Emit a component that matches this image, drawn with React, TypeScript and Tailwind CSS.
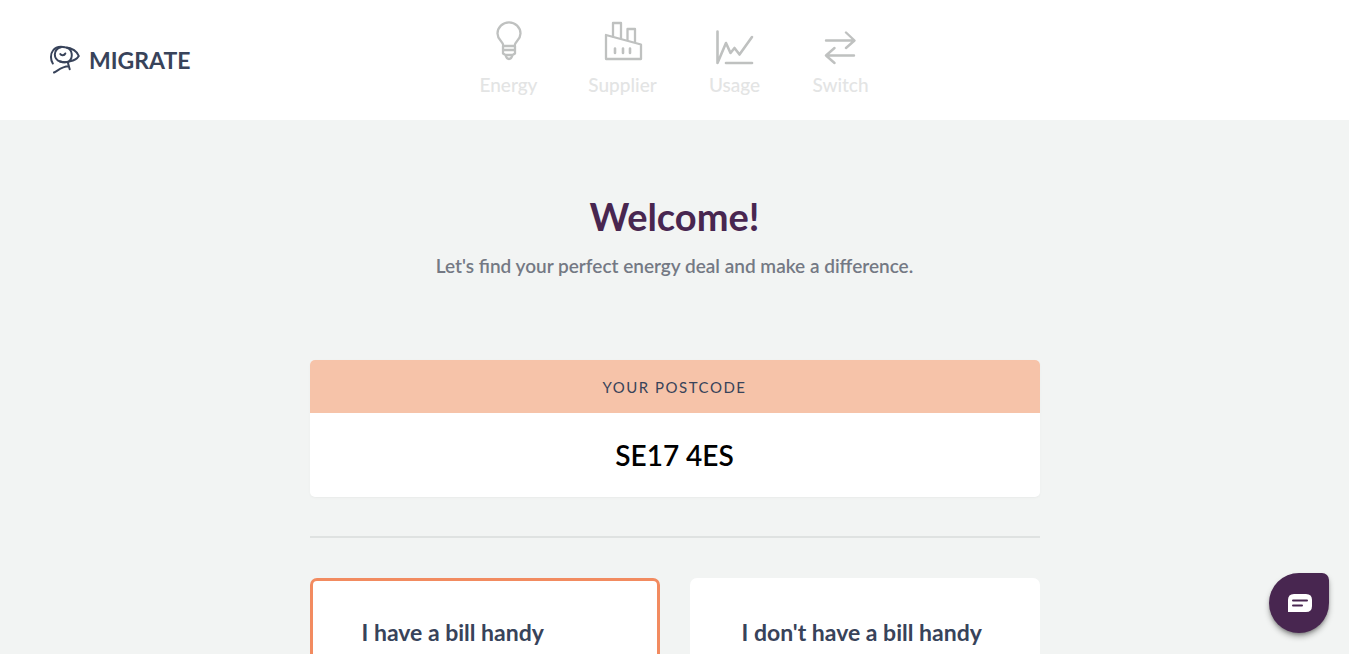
import type { ReactNode } from "react";

const line = {
  fill: "none",
  stroke: "currentColor",
  strokeLinecap: "round",
  strokeLinejoin: "round",
} as const;

function BirdLogo() {
  return (
    <svg width="32" height="30" viewBox="0 0 32 30" aria-hidden="true" {...line} strokeWidth="2">
      <path d="M3.800 18.500C1.500 15 1.200 9 4 5.500C7 1.500 12 1.300 16 2.200C23 3 28 6 29.800 11C28 14 25 15.500 21 16.300C18 17.500 14 17.500 11 16.500" />
      <path d="M18 2.800C24 5 24 13 20 16.300C15 18.500 6 17 5.800 9.500C6 5.500 8.500 3 12 2.200" />
      <path d="M11.300 9C12.300 10.800 15.300 10.700 16.300 8.500" />
      <path d="M5 27.500C9 25.500 13 21.500 19.500 21.300M19 18L20.700 24.300" />
    </svg>
  );
}

function BulbIcon() {
  return (
    <svg width="28" height="40" viewBox="0 0 28 40" aria-hidden="true" {...line} strokeWidth="2.300">
      <path d="M8.500 25C8 20 2.500 19 2.500 12.500A11.500 11.200 0 0 1 25.500 12.500C25.500 19 20 20 19.500 25Z" />
      <path d="M8 25V32.500L10.500 34H17.500L20 32.500V25M8 29H20M10.500 34C11 36 12 38 14 38S17 36 17.500 34" />
    </svg>
  );
}

function FactoryIcon() {
  return (
    <svg width="40" height="40" viewBox="0 0 40 40" aria-hidden="true" {...line} strokeWidth="2.300">
      <path d="M3 14L38 23.500V38H3Z" />
      <path d="M10 15.500V2H18V17.500M24.500 19V8H32V21" />
      <path d="M12 27.500V32M20 27.500V32M27 27.500V32" strokeWidth="2.600" />
    </svg>
  );
}

function ChartIcon() {
  return (
    <svg width="40" height="36" viewBox="0 0 40 36" aria-hidden="true" {...line} strokeWidth="2.600">
      <path d="M2.500 2.500V34L11 14L15.500 24L19.500 19L24.500 25.500L37 8" />
      <path d="M11 34H37" />
    </svg>
  );
}

function SwitchIcon() {
  return (
    <svg width="34" height="34" viewBox="0 0 34 34" aria-hidden="true" {...line} strokeWidth="2.400">
      <path d="M2 9.500H30M22 1.500L30.500 9.500L22 17M30 24.500H2M10.500 17L2 24.500L10.500 32" />
    </svg>
  );
}

function Step({ icon, label, width }: { icon: ReactNode; label: string; width: string }) {
  return (
    <li className={`flex flex-col items-center gap-2 ${width}`}>
      <span className="text-[#bfc1c0]">{icon}</span>
      <span className="text-[19px] leading-6 font-medium text-[#e3e4e4]">{label}</span>
    </li>
  );
}

export default function App() {
  return (
    <div className="h-screen overflow-hidden bg-white pr-[17px] font-['Lato','Open_Sans',sans-serif]">
      <div className="flex min-h-full flex-col bg-[#f2f4f3]">
        <header className="grid h-[120px] shrink-0 grid-cols-[1fr_auto_1fr] bg-white">
          <a href="#" className="flex items-center gap-2 pl-[49px] text-[#38435a]">
            <BirdLogo />
            <span className="text-[23px] font-bold">MIGRATE</span>
          </a>
          <nav aria-label="Progress" className="flex items-end pb-[23px]">
            <ol className="flex items-end gap-[50px]">
              <Step width="w-[58px]" label="Energy" icon={<span className="block pb-1"><BulbIcon /></span>} />
              <Step width="w-[70px]" label="Supplier" icon={<span className="block pb-1"><FactoryIcon /></span>} />
              <Step width="w-[54px]" label="Usage" icon={<ChartIcon />} />
              <Step width="w-[58px]" label="Switch" icon={<SwitchIcon />} />
            </ol>
          </nav>
        </header>

        <main className="mx-auto w-full max-w-[730px] pt-[71px]">
          <h1 className="text-center text-[38px] leading-[50px] font-bold text-[#482650]">Welcome!</h1>
          <p className="mt-[13px] text-center text-[19px] leading-6 font-semibold text-[#747984]">
            Let's find your perfect energy deal and make a difference.
          </p>

          <section className="mt-[82px] overflow-hidden rounded-[5px] bg-white shadow-sm shadow-black/3">
            <label
              htmlFor="postcode"
              className="flex h-[53px] items-center justify-center bg-[#f6c3a9] pt-0.5 text-[15px] tracking-widest text-[#38435a]"
            >
              YOUR POSTCODE
            </label>
            <input
              id="postcode"
              defaultValue="SE17 4ES"
              className="block h-[84px] w-full text-center text-[28px] font-semibold text-black outline-none"
            />
          </section>

          <hr className="mt-[39px] border-t-2 border-[#dfe2e1]" />

          <div className="mt-10 grid grid-cols-2 gap-[30px]">
            <button
              type="button"
              className="flex h-40 items-start rounded-[7px] border-3 border-[#f28b60] bg-white px-[49px] pt-[35px] text-left text-[23px] leading-8 font-bold whitespace-nowrap text-[#38435a]"
            >
              I have a bill handy
            </button>
            <button
              type="button"
              className="flex h-40 items-start rounded-[7px] border-3 border-white bg-white px-[49px] pt-[35px] text-left text-[23px] leading-8 font-bold whitespace-nowrap text-[#38435a]"
            >
              I don't have a bill handy
            </button>
          </div>
        </main>
      </div>

      <button
        type="button"
        aria-label="Open chat"
        className="fixed right-[37px] bottom-[21px] flex size-[60px] items-center justify-center rounded-[30px_7px_30px_30px] bg-[#482650] pl-0.5 shadow-md shadow-black/40"
      >
        <svg width="26" height="20" viewBox="0 0 26 20" aria-hidden="true">
          <path d="M7 1H19Q25 1 25 7V13Q25 19 19 19H1V7Q1 1 7 1Z" fill="white" />
          <path d="M6 7.500H20M6 12.500H15" stroke="#482650" strokeWidth="2" strokeLinecap="round" />
        </svg>
      </button>
    </div>
  );
}
